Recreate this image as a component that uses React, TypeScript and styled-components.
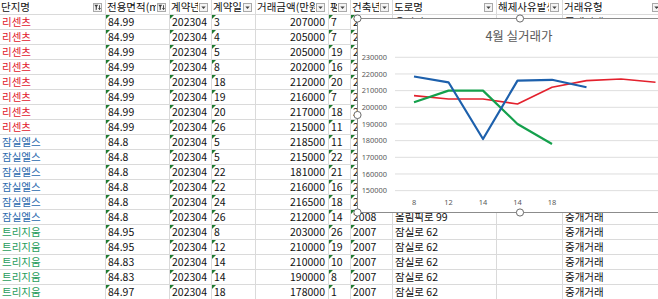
import styled, { createGlobalStyle } from "styled-components";

const GlobalStyle = createGlobalStyle`
  html, body {
    margin: 0;
    background: #fff;
    overflow: hidden;
  }
  body {
    font-family: "Noto Sans CJK KR", "Noto Sans", sans-serif;
  }
`;

type Brand = "red" | "blue" | "green";

interface Deal {
  name: string;
  brand: Brand;
  area: string;
  day: string;
  price: number;
  py: string;
  built: string;
  road: string;
}

const brandColor: Record<Brand, string> = {
  red: "#e1162c",
  blue: "#2a69ad",
  green: "#1f9d5c",
};

const deals: Deal[] = [
  { name: "리센츠", brand: "red", area: "84.99", day: "3", price: 207000, py: "7", built: "2008", road: "올림픽로 135" },
  { name: "리센츠", brand: "red", area: "84.99", day: "4", price: 205000, py: "7", built: "2008", road: "올림픽로 135" },
  { name: "리센츠", brand: "red", area: "84.99", day: "5", price: 205000, py: "19", built: "2008", road: "올림픽로 135" },
  { name: "리센츠", brand: "red", area: "84.99", day: "8", price: 202000, py: "16", built: "2008", road: "올림픽로 135" },
  { name: "리센츠", brand: "red", area: "84.99", day: "18", price: 212000, py: "20", built: "2008", road: "올림픽로 135" },
  { name: "리센츠", brand: "red", area: "84.99", day: "19", price: 216000, py: "7", built: "2008", road: "올림픽로 135" },
  { name: "리센츠", brand: "red", area: "84.99", day: "20", price: 217000, py: "18", built: "2008", road: "올림픽로 135" },
  { name: "리센츠", brand: "red", area: "84.99", day: "26", price: 215000, py: "11", built: "2008", road: "올림픽로 135" },
  { name: "잠실엘스", brand: "blue", area: "84.8", day: "5", price: 218500, py: "11", built: "2008", road: "올림픽로 99" },
  { name: "잠실엘스", brand: "blue", area: "84.8", day: "5", price: 215000, py: "22", built: "2008", road: "올림픽로 99" },
  { name: "잠실엘스", brand: "blue", area: "84.8", day: "22", price: 181000, py: "21", built: "2008", road: "올림픽로 99" },
  { name: "잠실엘스", brand: "blue", area: "84.8", day: "22", price: 216000, py: "16", built: "2008", road: "올림픽로 99" },
  { name: "잠실엘스", brand: "blue", area: "84.8", day: "24", price: 216500, py: "18", built: "2008", road: "올림픽로 99" },
  { name: "잠실엘스", brand: "blue", area: "84.8", day: "26", price: 212000, py: "14", built: "2008", road: "올림픽로 99" },
  { name: "트리지움", brand: "green", area: "84.95", day: "8", price: 203000, py: "26", built: "2007", road: "잠실로 62" },
  { name: "트리지움", brand: "green", area: "84.95", day: "12", price: 210000, py: "19", built: "2007", road: "잠실로 62" },
  { name: "트리지움", brand: "green", area: "84.83", day: "14", price: 210000, py: "10", built: "2007", road: "잠실로 62" },
  { name: "트리지움", brand: "green", area: "84.83", day: "14", price: 190000, py: "8", built: "2007", road: "잠실로 62" },
  { name: "트리지움", brand: "green", area: "84.97", day: "18", price: 178000, py: "1", built: "2007", road: "잠실로 62" },
];

const headers: { label: string; filter: "sort" | "drop" }[] = [
  { label: "단지명", filter: "sort" },
  { label: "전용면적(m²)", filter: "sort" },
  { label: "계약년", filter: "drop" },
  { label: "계약일", filter: "drop" },
  { label: "거래금액(만원)", filter: "drop" },
  { label: "평", filter: "drop" },
  { label: "건축년", filter: "drop" },
  { label: "도로명", filter: "drop" },
  { label: "해제사유발생일", filter: "drop" },
  { label: "거래유형", filter: "drop" },
];

function FilterButton({ kind }: { kind: "sort" | "drop" }) {
  return (
    <FilterBox>
      {kind === "sort" ? (
        <svg width="7" height="7" viewBox="0 0 7 7">
          <path d="M0.3 0.8 H4.2 L2.8 2.8 V5.6 L1.7 6.2 V2.8 Z" fill="#3a3a3a" />
          <path d="M5.5 1.2 V5.4 M4.4 4.2 L5.5 5.6 L6.6 4.2" stroke="#3a3a3a" strokeWidth="0.9" fill="none" />
        </svg>
      ) : (
        <svg width="7" height="7" viewBox="0 0 7 7">
          <path d="M1.3 2.6 H5.7 L3.5 4.9 Z" fill="#404040" />
        </svg>
      )}
    </FilterBox>
  );
}

// chart geometry, relative to the chart frame
const X0 = 57;
const DX = 34.5;
const yOf = (v: number) => 89.3 + ((200000 - v) / 10000) * 16.67;

const series = [
  { color: "#e3212d", width: 1.6, values: [207000, 205000, 205000, 202000, 212000, 216000, 217000, 215000] },
  { color: "#14a04c", width: 2.2, values: [203000, 210000, 210000, 190000, 178000] },
  { color: "#1d60ac", width: 2.2, values: [218500, 215000, 181000, 216000, 216500, 212000] },
];

const ticks = [230000, 220000, 210000, 200000, 190000, 180000, 170000, 160000, 150000];
const dayLabels = ["8", "12", "14", "14", "18"];

function PriceChart() {
  return (
    <ChartFrame>
      <svg width="330" height="195" style={{ overflow: "visible", display: "block" }}>
        <rect x="0.5" y="0.5" width="340" height="194" fill="#fff" stroke="#8c8c8c" />
        <text x="162" y="23" textAnchor="middle" fontSize="12.5" fill="#595959" fontFamily="Noto Sans CJK KR, sans-serif">
          4월 실거래가
        </text>
        {ticks.map((t) => (
          <g key={t}>
            <line x1="38" x2="330" y1={yOf(t)} y2={yOf(t)} stroke="#dedede" strokeWidth="1" />
            <text x="30" y={yOf(t) + 2.6} textAnchor="end" fontSize="7.4" fill="#595959" fontFamily="Noto Sans, sans-serif">
              {t}
            </text>
          </g>
        ))}
        {dayLabels.map((d, i) => (
          <text key={i} x={X0 + DX * i} y="187" textAnchor="middle" fontSize="7.4" fill="#595959" fontFamily="Noto Sans, sans-serif">
            {d}
          </text>
        ))}
        {series.map((s) => (
          <polyline
            key={s.color}
            points={s.values.map((v, i) => `${X0 + DX * i},${yOf(v)}`).join(" ")}
            fill="none"
            stroke={s.color}
            strokeWidth={s.width}
            strokeLinejoin="round"
          />
        ))}
        {[
          [0.5, 0.5],
          [163, 0.5],
          [0.5, 97],
          [0.5, 194.5],
          [163, 194.5],
        ].map(([cx, cy], i) => (
          <circle key={i} cx={cx} cy={cy} r="3.6" fill="#fff" stroke="#6b6b6b" strokeWidth="1" />
        ))}
      </svg>
    </ChartFrame>
  );
}

export default function App() {
  return (
    <>
      <GlobalStyle />
      <Page>
        <Sheet>
          {headers.map((h) => (
            <HeaderCell key={h.label}>
              <HeaderLabel>{h.label}</HeaderLabel>
              <FilterButton kind={h.filter} />
            </HeaderCell>
          ))}
          {deals.map((d, i) => (
            <RowGroup key={i}>
              <Cell $color={brandColor[d.brand]}>{d.name}</Cell>
              <Cell $flag>{d.area}</Cell>
              <Cell $flag>202304</Cell>
              <Cell $flag>{d.day}</Cell>
              <Cell $right>{d.price}</Cell>
              <Cell $flag>{d.py}</Cell>
              <Cell $flag>{d.built}</Cell>
              <Cell>{d.road}</Cell>
              <Cell />
              <Cell>중개거래</Cell>
            </RowGroup>
          ))}
        </Sheet>
        <PriceChart />
      </Page>
    </>
  );
}

const Page = styled.div`
  position: relative;
  width: 658px;
  height: 299px;
  overflow: hidden;
`;

const Sheet = styled.div`
  display: grid;
  grid-template-columns: 106px 64px 42px 44px 73px 22px 42px 104px 66px 102px;
  grid-auto-rows: 15px;
  width: 665px;
  font-size: 10.5px;
  color: #111;
`;

const RowGroup = styled.div`
  display: contents;
`;

const HeaderCell = styled.div`
  display: flex;
  align-items: center;
  border-right: 1px solid #dadada;
  border-bottom: 1px solid #dadada;
  padding-left: 1px;
  padding-right: 3px;
  overflow: hidden;
`;

const HeaderLabel = styled.span`
  flex: 1;
  min-width: 0;
  overflow: hidden;
  white-space: nowrap;
  line-height: 14px;
`;

const FilterBox = styled.span`
  flex: none;
  width: 9px;
  height: 9px;
  margin-left: 1px;
  box-sizing: border-box;
  border: 1px solid #a9a9a9;
  background: #f4f4f4;
  display: flex;
  align-items: center;
  justify-content: center;
`;

const Cell = styled.div<{ $color?: string; $flag?: boolean; $right?: boolean }>`
  position: relative;
  border-right: 1px solid #dadada;
  border-bottom: 1px solid #dadada;
  padding: 0 3px 0 2px;
  line-height: 14px;
  white-space: nowrap;
  overflow: hidden;
  color: ${(p) => p.$color ?? "#111"};
  text-align: ${(p) => (p.$right ? "right" : "left")};

  &::before {
    content: "";
    display: ${(p) => (p.$flag ? "block" : "none")};
    position: absolute;
    left: 0;
    top: 0;
    border-top: 4px solid #1e7b30;
    border-right: 4px solid transparent;
  }
`;

const ChartFrame = styled.div`
  position: absolute;
  left: 357px;
  top: 18px;
  width: 330px;
  height: 195px;
`;
